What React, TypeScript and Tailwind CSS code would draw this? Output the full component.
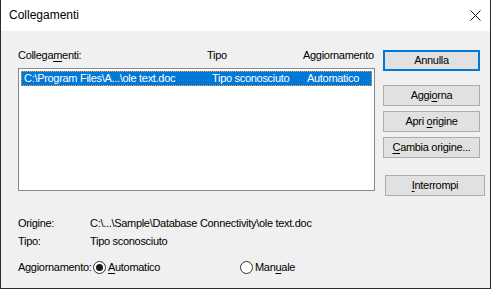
import React from "react";

const ui = "font-['Liberation_Sans',Arial,sans-serif] text-[11px] leading-[13px] tracking-[-0.3px] text-black";

function Mn({ children }: { children: React.ReactNode }) {
  return <span className="underline underline-offset-[2px]">{children}</span>;
}

function Btn({
  children,
  primary,
  className = "",
}: {
  children: React.ReactNode;
  primary?: boolean;
  className?: string;
}) {
  return (
    <div
      className={`flex h-[21px] items-center justify-center bg-[#e1e1e1] ${
        primary ? "border-2 border-[#0078d7]" : "border border-[#adadad]"
      } ${className}`}
    >
      <span>{children}</span>
    </div>
  );
}

function Radio({ checked }: { checked?: boolean }) {
  return (
    <div className="flex h-[13px] w-[13px] items-center justify-center rounded-full border border-[#333] bg-white">
      {checked && <div className="h-[7px] w-[7px] rounded-full bg-[#1a1a1a]" />}
    </div>
  );
}

export default function App() {
  return (
    <div className={`flex h-[289px] w-[491px] flex-col border-x border-b border-[#2b2b2b] ${ui}`}>
      {/* title bar */}
      <div className="flex h-[31px] shrink-0 items-center justify-between bg-white pl-[8px] pr-[9px]">
        <span className="text-[12px] tracking-normal">Collegamenti</span>
        <svg width="11" height="11" viewBox="0 0 11 11">
          <path d="M0.5 0.5L10.5 10.5M10.5 0.5L0.5 10.5" stroke="#111" strokeWidth="1" />
        </svg>
      </div>

      <div className="flex flex-1 flex-col bg-[#f0f0f0] pl-[17px]">
        <div className="flex">
          {/* list column */}
          <div className="flex w-[357px] flex-col pt-[17px]">
            <div className="flex h-[14px] items-center">
              <span className="w-[189px]">
                Collega<Mn>m</Mn>enti:
              </span>
              <span className="w-[96px]">Tipo</span>
              <span>Aggiornamento</span>
            </div>
            <div className="mt-[6px] h-[123px] border border-[#828790] bg-white p-[2px]">
              <div className="flex h-[15px] items-center border border-dotted border-[#ff9a3c] bg-[#0078d7] pl-[2px] text-white">
                <span className="w-[188px]">C:\Program Files\A...\ole text.doc</span>
                <span className="w-[95px]">Tipo sconosciuto</span>
                <span>Automatico</span>
              </div>
            </div>
          </div>

          {/* buttons */}
          <div className="ml-[8px] flex flex-col pt-[19px]">
            <Btn primary className="w-[97px]">
              Annulla
            </Btn>
            <Btn className="mt-[14px] w-[97px]">
              Aggi<Mn>o</Mn>rna
            </Btn>
            <Btn className="mt-[5px] w-[97px]">
              Apri <Mn>o</Mn>rigine
            </Btn>
            <Btn className="mt-[5px] w-[97px]">
              <Mn>C</Mn>ambia origine...
            </Btn>
            <Btn className="ml-[2px] mt-[17px] w-[100px]">
              <Mn>I</Mn>nterrompi
            </Btn>
          </div>
        </div>

        {/* details */}
        <div className="mt-[21px] flex flex-col">
          <div className="flex h-[13px] items-center">
            <span className="w-[72px]">Origine:</span>
            <span>C:\...\Sample\Database Connectivity\ole text.doc</span>
          </div>
          <div className="mt-[5px] flex h-[13px] items-center">
            <span className="w-[72px]">Tipo:</span>
            <span>Tipo sconosciuto</span>
          </div>
          <div className="mt-[13px] flex h-[13px] items-center">
            <span className="w-[75px]">Aggiornamento:</span>
            <Radio checked />
            <span className="ml-[2px] w-[132px]">
              <Mn>A</Mn>utomatico
            </span>
            <Radio />
            <span className="ml-[2px]">
              Man<Mn>u</Mn>ale
            </span>
          </div>
        </div>
      </div>
    </div>
  );
}
